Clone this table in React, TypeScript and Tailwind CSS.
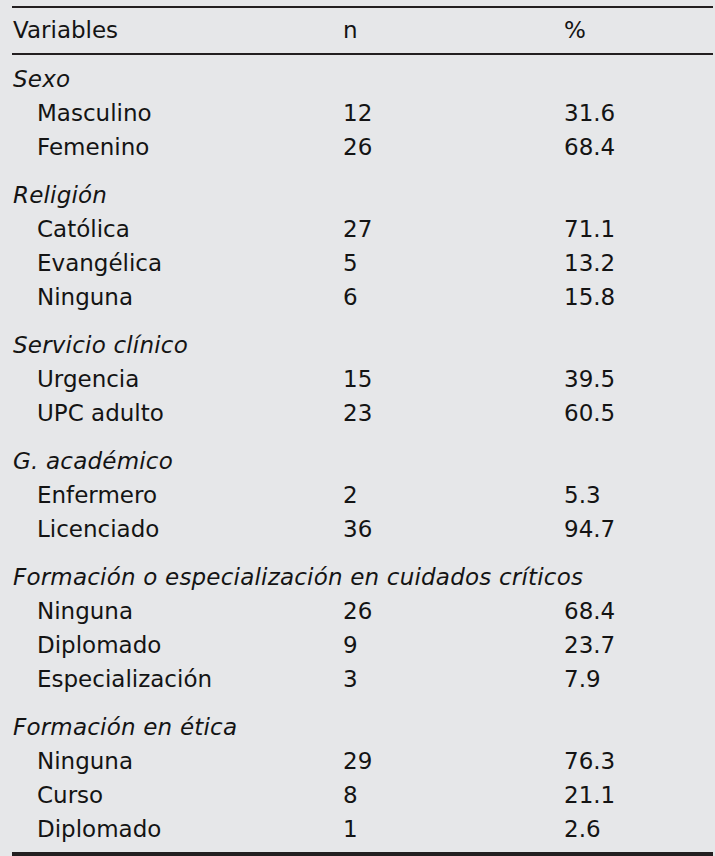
import React from "react";

type Group = { title: string; rows: [string, string, string][] };

const groups: Group[] = [
  { title: "Sexo", rows: [["Masculino", "12", "31.6"], ["Femenino", "26", "68.4"]] },
  {
    title: "Religión",
    rows: [
      ["Católica", "27", "71.1"],
      ["Evangélica", "5", "13.2"],
      ["Ninguna", "6", "15.8"],
    ],
  },
  { title: "Servicio clínico", rows: [["Urgencia", "15", "39.5"], ["UPC adulto", "23", "60.5"]] },
  { title: "G. académico", rows: [["Enfermero", "2", "5.3"], ["Licenciado", "36", "94.7"]] },
  {
    title: "Formación o especialización en cuidados críticos",
    rows: [
      ["Ninguna", "26", "68.4"],
      ["Diplomado", "9", "23.7"],
      ["Especialización", "3", "7.9"],
    ],
  },
  {
    title: "Formación en ética",
    rows: [
      ["Ninguna", "29", "76.3"],
      ["Curso", "8", "21.1"],
      ["Diplomado", "1", "2.6"],
    ],
  },
];

export default function App() {
  return (
    <div
      className="w-[715px] h-[856px] bg-[#e6e7e9] text-[#141414] overflow-hidden pt-[6px]"
      style={{ fontFamily: '"DejaVu Sans", "Noto Sans", sans-serif' }}
    >
      <div className="ml-[12px] w-[701px] text-[23px] leading-[34px]">
        <div className="border-t-2 border-b-2 border-[#231f20] grid grid-cols-[331px_221px_1fr] pt-[5px] pb-[6px]">
          <div className="pl-[1px]">Variables</div>
          <div>n</div>
          <div>%</div>
        </div>
        <div className="pt-[7px] pb-[6px] border-b-4 border-[#231f20] flex flex-col gap-[14px]">
          {groups.map((g) => (
            <div key={g.title} className="flex flex-col">
              <div className="italic pl-[1px] h-[34px] whitespace-nowrap tracking-[0.2px]">{g.title}</div>
              {g.rows.map((r, i) => (
                <div key={i} className="grid grid-cols-[331px_221px_1fr] h-[34px]">
                  <div className="pl-[25px]">{r[0]}</div>
                  <div>{r[1]}</div>
                  <div>{r[2]}</div>
                </div>
              ))}
            </div>
          ))}
        </div>
      </div>
    </div>
  );
}
